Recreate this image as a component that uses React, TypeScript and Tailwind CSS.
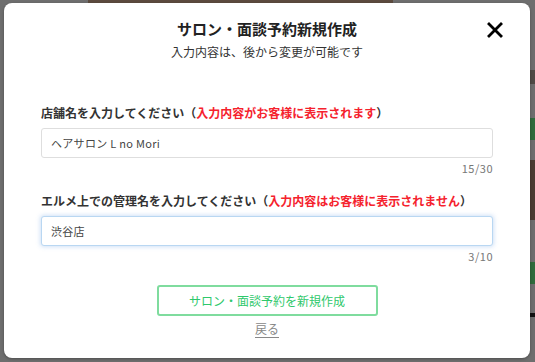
import React from 'react';

const Field: React.FC<{
  label: string;
  note: string;
  value: string;
  count: string;
  focused?: boolean;
}> = ({ label, note, value, count, focused }) => (
  <div className="flex flex-col">
    <label className="text-[12px] font-bold leading-[18px] text-[#333]">
      {label}（<span className="text-[#f5222d]">{note}</span>）
    </label>
    <div
      className={
        'mt-[6px] h-[30px] rounded-[3px] border bg-white px-[9px] flex items-center ' +
        (focused
          ? 'border-[#b9d7f2] shadow-[0_0_4px_1px_rgba(120,170,230,0.35)]'
          : 'border-[#dedede]')
      }
    >
      <span className="text-[11px] text-[#444] tracking-[0.3px]">{value}</span>
    </div>
    <div className="mt-[3px] text-right text-[11px] leading-[14px] text-[#777] tracking-[0.5px]">{count}</div>
  </div>
);

export default function App() {
  return (
    <div
      className="relative h-[362px] w-[535px] overflow-hidden bg-[#6e6e6e]"
      style={{ fontFamily: '"Noto Sans CJK JP", "Noto Sans", sans-serif' }}
    >
      {/* dimmed page behind the dialog */}
      <div className="absolute left-[88px] top-0 h-[6px] w-[305px] bg-[#5c4a3e]" />
      <div className="absolute right-0 top-[70px] h-[14px] w-[5px] bg-[#4f4a45]" />
      <div className="absolute right-0 top-[118px] h-[22px] w-[5px] bg-[#2f6b3c]" />
      <div className="absolute right-0 top-[160px] h-[60px] w-[5px] bg-[#4b3d33]" />
      <div className="absolute right-0 top-[262px] h-[22px] w-[5px] bg-[#2f6b3c]" />
      <div className="absolute right-0 top-[313px] h-[4px] w-[5px] bg-[#111]" />

      <div className="absolute left-[4px] top-[3px] flex h-[355px] w-[526px] flex-col rounded-[8px] bg-white px-[37px] shadow-[0_1px_3px_rgba(0,0,0,0.3)]">
        <button className="absolute right-[25px] top-[17px] flex h-[20px] w-[20px] items-center justify-center">
          <svg width="16" height="16" viewBox="0 0 16 16">
            <path d="M2 2L14 14M14 2L2 14" stroke="#000" strokeWidth="2.8" strokeLinecap="square" />
          </svg>
        </button>

        <div className="mt-[16px] text-center text-[15px] font-bold leading-[20px] text-[#222]">
          サロン・面談予約新規作成
        </div>
        <div className="mt-[4px] text-center text-[12px] leading-[18px] text-[#333]">
          入力内容は、後から変更が可能です
        </div>

        <div className="mt-[43px]">
          <Field
            label="店舗名を入力してください"
            note="入力内容がお客様に表示されます"
            value="ヘアサロン L no Mori"
            count="15/30"
          />
        </div>
        <div className="mt-[17px]">
          <Field
            label="エルメ上での管理名を入力してください"
            note="入力内容はお客様に表示されません"
            value="渋谷店"
            count="3/10"
            focused
          />
        </div>

        <div className="mt-[22px] flex flex-col items-center">
          <button className="flex h-[31px] w-[221px] items-center justify-center rounded-[3px] border-2 border-[#7fdc9e] text-[12px] text-[#2ec86b]">
            サロン・面談予約を新規作成
          </button>
          <a className="mt-[4px] text-[12px] leading-[18px] text-[#888] underline underline-offset-[3px]">戻る</a>
        </div>
      </div>
    </div>
  );
}
